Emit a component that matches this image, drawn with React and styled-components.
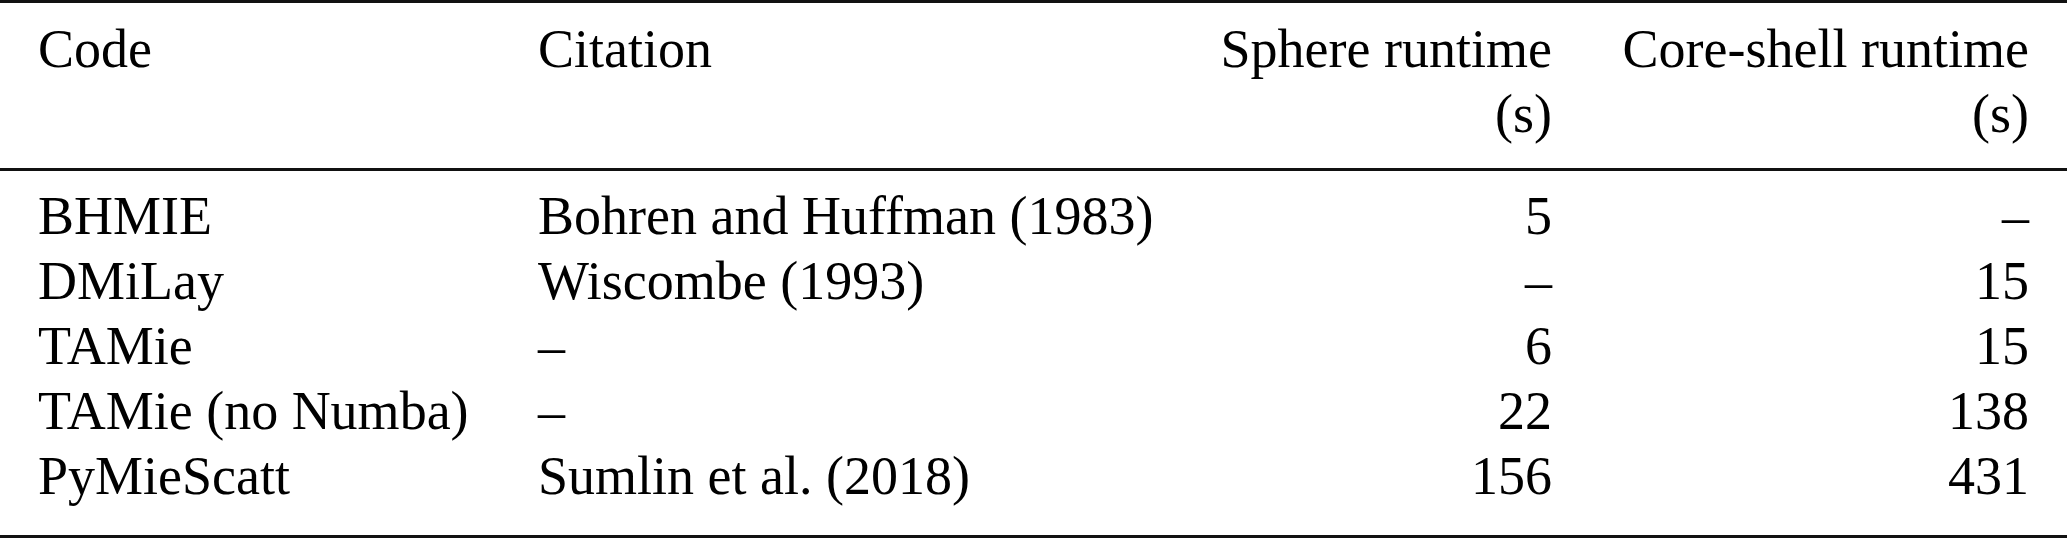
import React from "react";
import styled, { createGlobalStyle } from "styled-components";

const Global = createGlobalStyle`
  html, body { margin: 0; padding: 0; background: #fff; }
  body { font-family: "Liberation Serif", "Times New Roman", serif; color: #000; }
`;

const Table = styled.div`
  width: 2067px;
  display: flex;
  flex-direction: column;
  font-family: "Liberation Serif", "Times New Roman", serif;
  font-size: 54px;
  line-height: 65px;
  color: #000;
`;

const Rule = styled.div`
  height: 3px;
  background: #111;
`;

const Section = styled.div`
  display: flex;
  flex-direction: column;
  padding: ${(p) => p.$pad};
`;

const Row = styled.div`
  display: grid;
  grid-template-columns: 500px 614px 400px 477px;
  padding: 0 38px;
`;

const Cell = styled.div`
  text-align: ${(p) => (p.$right ? "right" : "left")};
  white-space: nowrap;
`;

const Line = styled.span`
  display: block;
`;

const rows = [
  ["BHMIE", "Bohren and Huffman (1983)", "5", "–"],
  ["DMiLay", "Wiscombe (1993)", "–", "15"],
  ["TAMie", "–", "6", "15"],
  ["TAMie (no Numba)", "–", "22", "138"],
  ["PyMieScatt", "Sumlin et al. (2018)", "156", "431"],
];

export default function App() {
  return (
    <>
      <Global />
      <Table>
        <Rule />
        <Section $pad="14px 0 21px">
          <Row>
            <Cell>Code</Cell>
            <Cell>Citation</Cell>
            <Cell $right>
              <Line>Sphere runtime</Line>
              <Line>(s)</Line>
            </Cell>
            <Cell $right>
              <Line>Core-shell runtime</Line>
              <Line>(s)</Line>
            </Cell>
          </Row>
        </Section>
        <Rule />
        <Section $pad="13px 0 26px">
          {rows.map((r) => (
            <Row key={r[0]}>
              <Cell>{r[0]}</Cell>
              <Cell>{r[1]}</Cell>
              <Cell $right>{r[2]}</Cell>
              <Cell $right>{r[3]}</Cell>
            </Row>
          ))}
        </Section>
        <Rule />
      </Table>
    </>
  );
}
